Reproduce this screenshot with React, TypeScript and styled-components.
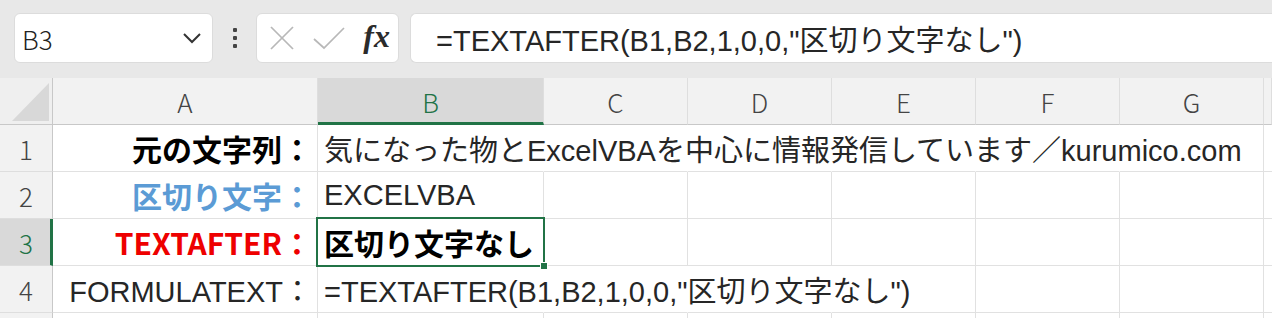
import React from "react";
import styled, { createGlobalStyle, css } from "styled-components";

const GlobalStyle = createGlobalStyle`
  html, body { margin: 0; padding: 0; background: #ffffff; }
  body {
    font-family: "Noto Sans CJK JP", "Noto Sans", sans-serif;
    overflow: hidden;
  }
`;

const GREEN = "#217346";
const TEXT_STACK = `"Liberation Sans", "Noto Sans CJK JP", sans-serif`;
const CJK_STACK = `"Noto Sans CJK JP", "Noto Sans", sans-serif`;

const Page = styled.div`
  width: 1272px;
  height: 318px;
  overflow: hidden;
  background: #ffffff;
`;

const Toolbar = styled.div`
  height: 78px;
  box-sizing: border-box;
  background: #e8e8e8;
  display: flex;
  align-items: flex-start;
  padding: 13px 0 0 14px;
`;

const Box = styled.div`
  height: 50px;
  box-sizing: border-box;
  background: #ffffff;
  border: 1px solid #dcdcdc;
  border-radius: 6px;
  display: flex;
  align-items: center;
`;

const NameBox = styled(Box)`
  width: 199px;
  padding: 0 8px 0 7px;
  justify-content: space-between;
`;

const NameText = styled.span`
  font-family: ${CJK_STACK};
  font-size: 26px;
  font-weight: 300;
  color: #222;
`;

const Grip = styled.div`
  width: 43px;
  height: 50px;
  display: flex;
  flex-direction: column;
  align-items: center;
  justify-content: center;
  gap: 4px;
`;

const Dot = styled.span`
  width: 4px;
  height: 4px;
  border-radius: 1px;
  background: #444;
`;

const FxBox = styled(Box)`
  width: 143px;
  padding: 0 8px 0 12px;
  justify-content: space-between;
`;

const FxLabel = styled.span`
  font-family: "Liberation Serif", "DejaVu Serif", serif;
  font-style: italic;
  font-weight: bold;
  font-size: 32px;
  color: #2b2b2b;
  line-height: 1;
  margin-top: -4px;
`;

const FormulaBox = styled(Box)`
  flex: 1;
  margin-left: 11px;
  border-radius: 6px 0 0 6px;
  border-right: none;
  padding-left: 25px;
`;

const FormulaText = styled.span`
  font-family: ${TEXT_STACK};
  font-size: 29px;
  font-weight: 400;
  color: #262626;
  white-space: nowrap;
`;

const Sheet = styled.div`
  display: grid;
  grid-template-columns: 53px 265px 226px repeat(5, 144px) 8px;
  grid-auto-rows: 47px;
  background: #ffffff;
`;

const Corner = styled.div`
  position: relative;
  box-sizing: border-box;
  background: #efefef;
  border-right: 1px solid #c8c8c8;
  border-bottom: 1px solid #c8c8c8;
  &::after {
    content: "";
    position: absolute;
    left: 12px;
    top: 5px;
    right: 3px;
    bottom: 3px;
    background: #d8d8d8;
    clip-path: polygon(100% 0, 100% 100%, 0 100%);
  }
`;

const ColHeader = styled.div<{ $selected?: boolean }>`
  box-sizing: border-box;
  background: ${(p) => (p.$selected ? "#d9d9d9" : "#f2f2f2")};
  border-right: 1px solid #dedede;
  border-bottom: ${(p) => (p.$selected ? `3px solid ${GREEN}` : "1px solid #c8c8c8")};
  display: flex;
  align-items: center;
  justify-content: center;
  padding-top: ${(p) => (p.$selected ? "2px" : "0")};
  font-family: ${CJK_STACK};
  font-size: 26px;
  font-weight: 300;
  color: ${(p) => (p.$selected ? GREEN : "#444")};
`;

const RowHeader = styled.div<{ $selected?: boolean }>`
  box-sizing: border-box;
  background: ${(p) => (p.$selected ? "#d9d9d9" : "#f2f2f2")};
  border-right: ${(p) => (p.$selected ? `3px solid ${GREEN}` : "1px solid #c8c8c8")};
  border-bottom: 1px solid #dedede;
  display: flex;
  align-items: center;
  justify-content: center;
  padding-left: ${(p) => (p.$selected ? "2px" : "0")};
  font-family: ${CJK_STACK};
  font-size: 26px;
  font-weight: 300;
  color: ${(p) => (p.$selected ? GREEN : "#444")};
`;

const Cell = styled.div<{
  $align?: "left" | "right";
  $bold?: boolean;
  $color?: string;
  $noRight?: boolean;
  $active?: boolean;
}>`
  position: relative;
  box-sizing: border-box;
  border-right: 1px solid ${(p) => (p.$noRight ? "transparent" : "#e1e1e1")};
  border-bottom: 1px solid #e1e1e1;
  display: flex;
  align-items: center;
  justify-content: ${(p) => (p.$align === "right" ? "flex-end" : "flex-start")};
  padding: 0 5px 0 6px;
  white-space: nowrap;
  font-family: ${(p) => (p.$bold ? CJK_STACK : TEXT_STACK)};
  font-size: ${(p) => (p.$bold ? "30px" : "29px")};
  font-weight: ${(p) => (p.$bold ? 700 : 400)};
  color: ${(p) => p.$color || "#262626"};
  ${(p) =>
    p.$active &&
    css`
      z-index: 1;
    `}
`;

const Selection = styled.div`
  position: absolute;
  left: -2px;
  top: -2px;
  right: -2px;
  bottom: -2px;
  border: 2px solid ${GREEN};
  pointer-events: none;
`;

const FillHandle = styled.span`
  position: absolute;
  right: -5px;
  bottom: -5px;
  width: 6px;
  height: 6px;
  background: ${GREEN};
  border: 1px solid #ffffff;
`;

const CellText = styled.span``;

const ChevronDown = () => (
  <svg width="20" height="12" viewBox="0 0 20 12" style={{ marginRight: 2 }}>
    <polyline points="2,2 10,10 18,2" fill="none" stroke="#333" strokeWidth="2" />
  </svg>
);

const CancelIcon = () => (
  <svg width="26" height="26" viewBox="0 0 26 26">
    <line x1="2" y1="2" x2="24" y2="24" stroke="#b8b8b8" strokeWidth="1.7" />
    <line x1="24" y1="2" x2="2" y2="24" stroke="#b8b8b8" strokeWidth="1.7" />
  </svg>
);

const EnterIcon = () => (
  <svg width="32" height="24" viewBox="0 0 32 24">
    <polyline points="1,13 11,22 31,2" fill="none" stroke="#b8b8b8" strokeWidth="1.7" />
  </svg>
);

type CellDef = {
  text?: string;
  align?: "left" | "right";
  bold?: boolean;
  color?: string;
};

type RowDef = {
  num: number;
  a: CellDef;
  b: CellDef;
  spill: number; // number of columns from B whose right gridline is hidden by overflowing text
};

const rows: RowDef[] = [
  {
    num: 1,
    a: { text: "元の文字列：", align: "right", bold: true, color: "#000" },
    b: { text: "気になった物とExcelVBAを中心に情報発信しています／kurumico.com" },
    spill: 5,
  },
  {
    num: 2,
    a: { text: "区切り文字：", align: "right", bold: true, color: "#5b9bd5" },
    b: { text: "EXCELVBA" },
    spill: 0,
  },
  {
    num: 3,
    a: { text: "TEXTAFTER：", align: "right", bold: true, color: "#ee0000" },
    b: { text: "区切り文字なし", bold: true, color: "#000" },
    spill: 0,
  },
  {
    num: 4,
    a: { text: "FORMULATEXT：", align: "right" },
    b: { text: '=TEXTAFTER(B1,B2,1,0,0,"区切り文字なし")' },
    spill: 3,
  },
  { num: 5, a: {}, b: {}, spill: 0 },
];

const columns = ["A", "B", "C", "D", "E", "F", "G", "H"];
const SELECTED_ROW = 3;
const SELECTED_COL = "B";
const VISIBLE_ROWS = 4;

export default function App() {
  return (
    <Page>
      <GlobalStyle />
      <Toolbar>
        <NameBox>
          <NameText>B3</NameText>
          <ChevronDown />
        </NameBox>
        <Grip>
          <Dot />
          <Dot />
          <Dot />
        </Grip>
        <FxBox>
          <CancelIcon />
          <EnterIcon />
          <FxLabel>fx</FxLabel>
        </FxBox>
        <FormulaBox>
          <FormulaText>=TEXTAFTER(B1,B2,1,0,0,"区切り文字なし")</FormulaText>
        </FormulaBox>
      </Toolbar>
      <Sheet>
        <Corner />
        {columns.map((c, i) => (
          <ColHeader key={c} $selected={c === SELECTED_COL}>
            {i < columns.length - 1 ? c : ""}
          </ColHeader>
        ))}
        {rows.map((r) => (
          <React.Fragment key={r.num}>
            <RowHeader $selected={r.num === SELECTED_ROW}>
              {r.num <= VISIBLE_ROWS ? r.num : ""}
            </RowHeader>
            <Cell $align={r.a.align} $bold={r.a.bold} $color={r.a.color}>
              <CellText>{r.a.text}</CellText>
            </Cell>
            <Cell
              $align={r.b.align}
              $bold={r.b.bold}
              $color={r.b.color}
              $noRight={r.spill > 0}
              $active={r.num === SELECTED_ROW}
            >
              <CellText>{r.b.text}</CellText>
              {r.num === SELECTED_ROW && (
                <Selection>
                  <FillHandle />
                </Selection>
              )}
            </Cell>
            {columns.slice(2).map((c, i) => (
              <Cell key={c} $noRight={i + 1 < r.spill} />
            ))}
          </React.Fragment>
        ))}
      </Sheet>
    </Page>
  );
}
